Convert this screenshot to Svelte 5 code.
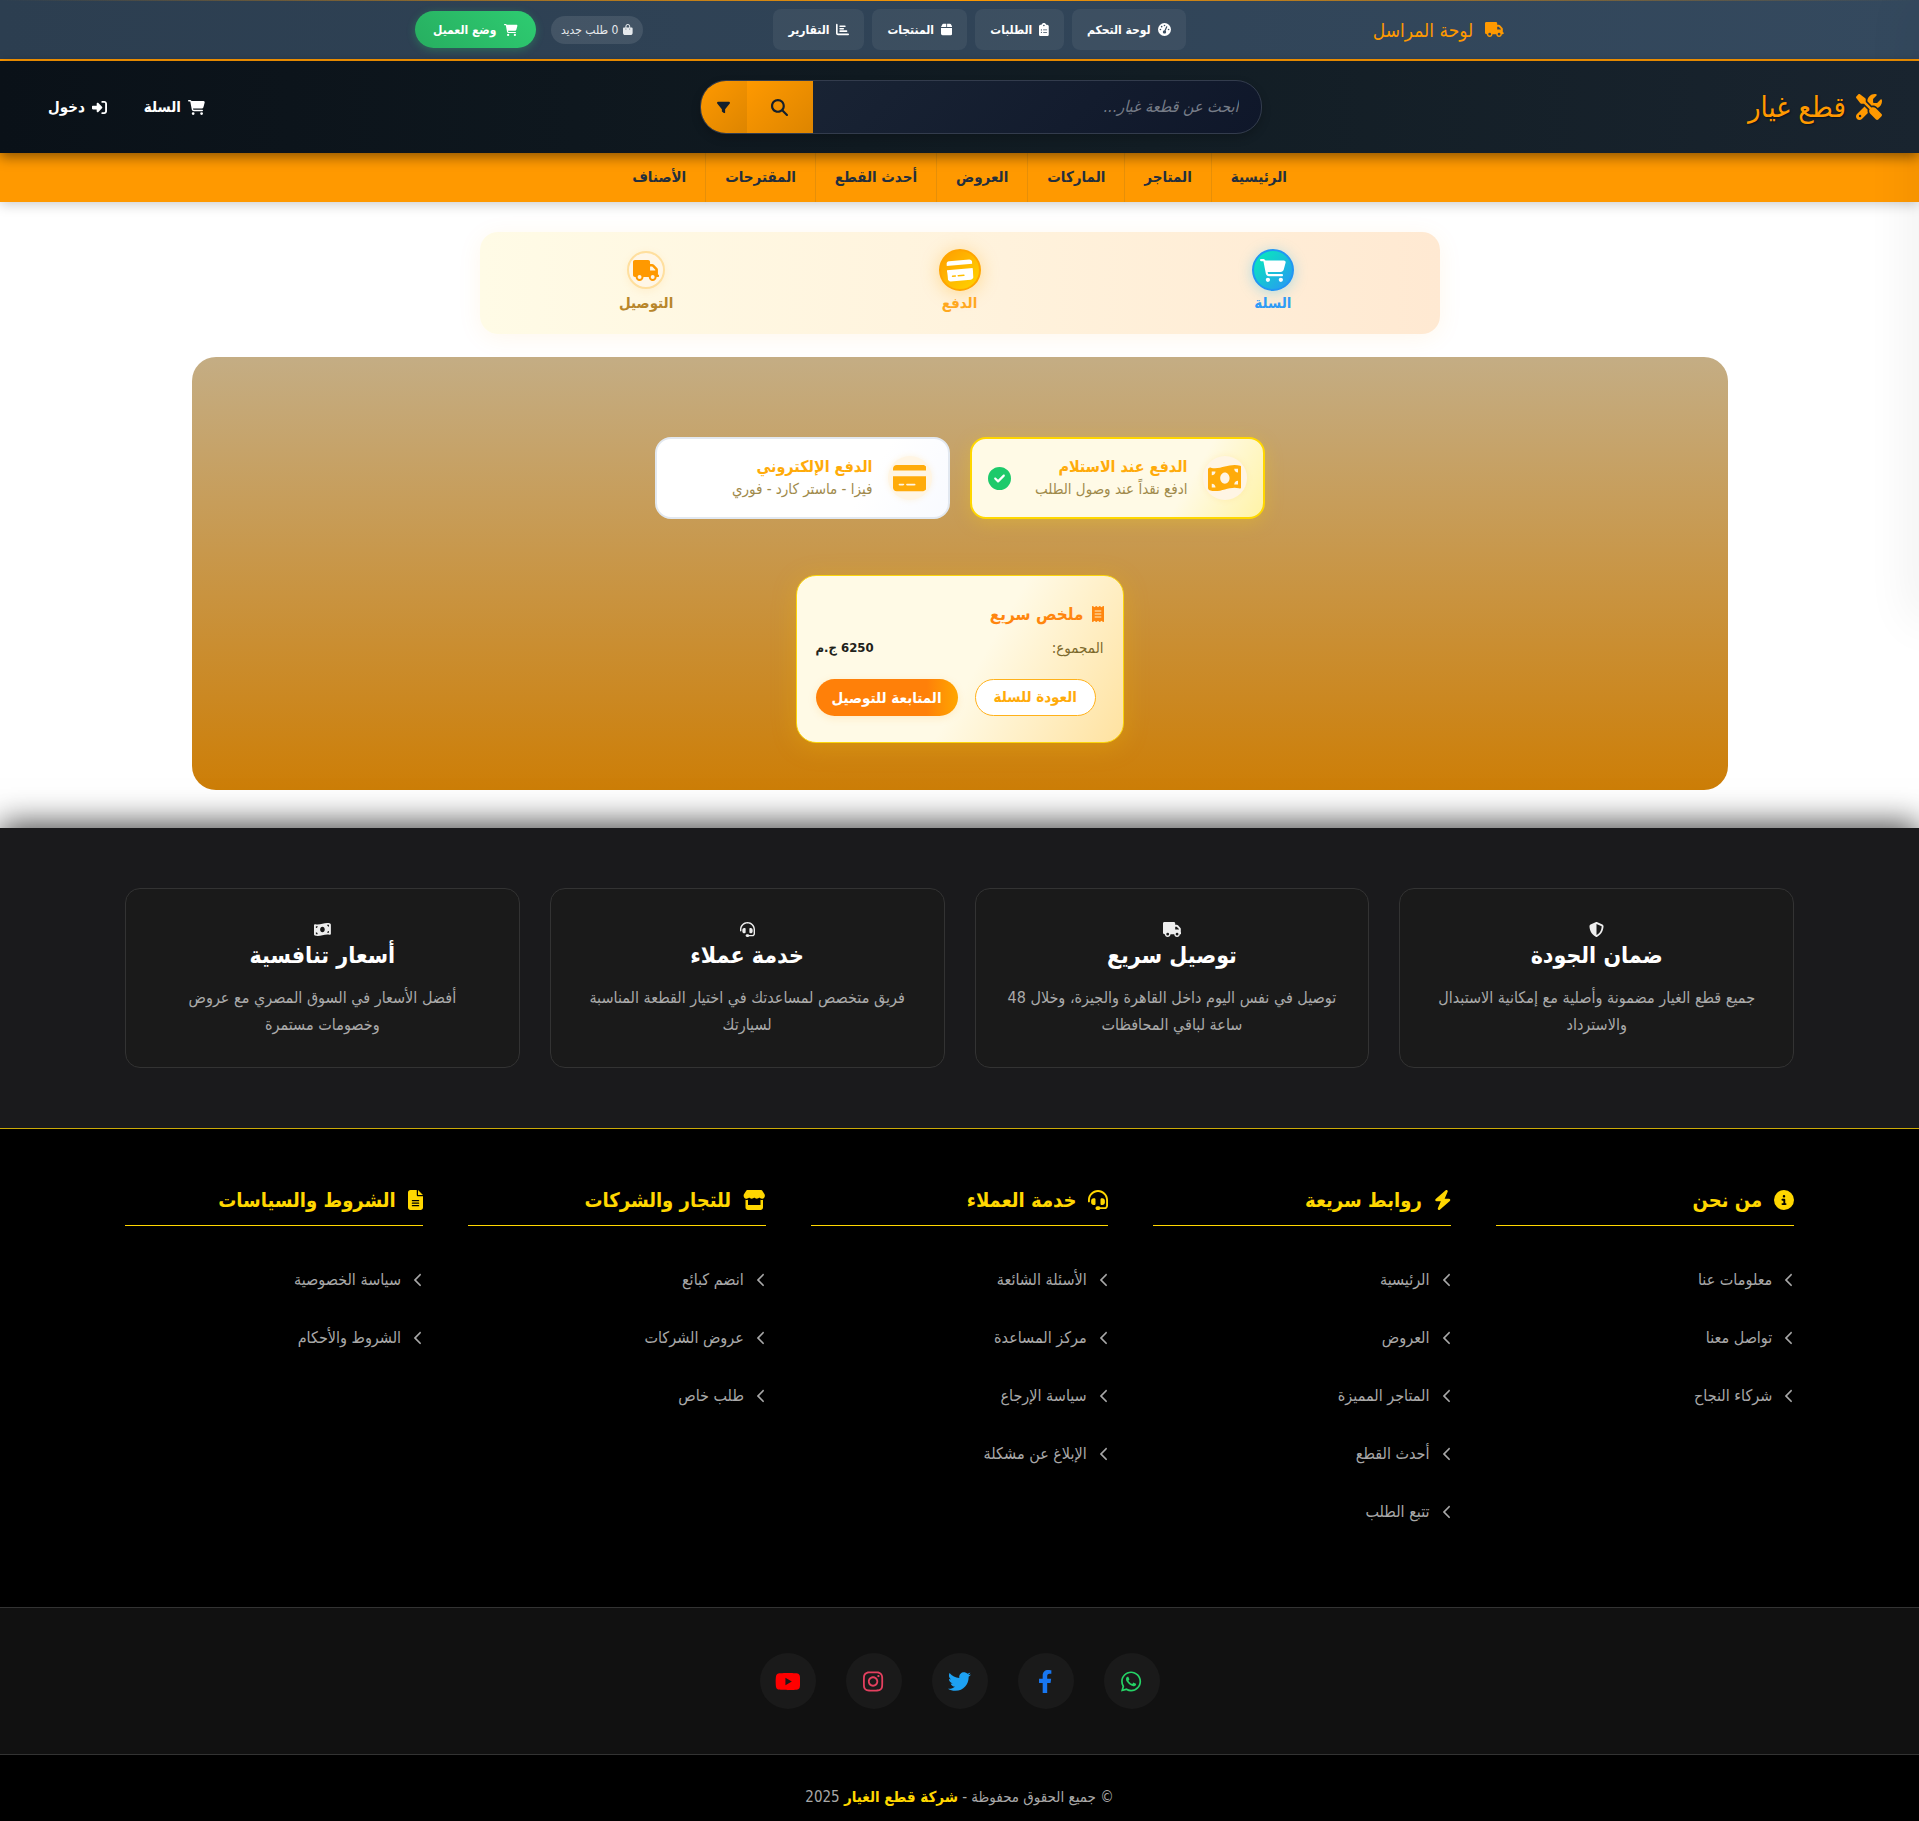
<script>
  const icons = {
    truck: [640, 'M48 0C21.5 0 0 21.5 0 48V368c0 26.5 21.5 48 48 48H64c0 53 43 96 96 96s96-43 96-96H384c0 53 43 96 96 96s96-43 96-96h32c17.7 0 32-14.3 32-32s-14.3-32-32-32V288 256 237.3c0-17-6.7-33.3-18.7-45.3L512 114.7c-12-12-28.3-18.7-45.3-18.7H416V48c0-26.5-21.5-48-48-48H48zM416 160h50.7L544 237.3V256H416V160zM112 416a48 48 0 1 1 96 0 48 48 0 1 1-96 0zm368-48a48 48 0 1 1 0 96 48 48 0 1 1 0-96z'],
    cart: [576, 'M0 24C0 10.7 10.7 0 24 0H69.5c22 0 41.5 12.8 50.6 32h411c26.3 0 45.5 25 38.6 50.4l-41 152.3c-8.5 31.4-37 53.3-69.5 53.3H170.7l5.4 28.5c2.2 11.3 12.1 19.5 23.6 19.5H488c13.3 0 24 10.7 24 24s-10.7 24-24 24H199.7c-34.6 0-64.3-24.6-70.7-58.5L77.4 54.5c-.7-3.8-4-6.5-7.9-6.5H24C10.7 48 0 37.3 0 24zM128 464a48 48 0 1 1 96 0 48 48 0 1 1-96 0zm336-48a48 48 0 1 1 0 96 48 48 0 1 1 0-96z'],
    card: [576, 'M64 32C28.7 32 0 60.7 0 96v32H576V96c0-35.3-28.7-64-64-64H64zM576 224H0V416c0 35.3 28.7 64 64 64H512c35.3 0 64-28.7 64-64V224zM112 352h64c8.8 0 16 7.2 16 16s-7.2 16-16 16H112c-8.8 0-16-7.2-16-16s7.2-16 16-16zm112 16c0-8.8 7.2-16 16-16H368c8.8 0 16 7.2 16 16s-7.2 16-16 16H240c-8.8 0-16-7.2-16-16z'],
    search: [512, 'M416 208c0 45.9-14.9 88.3-40 122.7L502.6 457.4c12.5 12.5 12.5 32.8 0 45.3s-32.8 12.5-45.3 0L330.7 376c-34.4 25.2-76.8 40-122.7 40C93.1 416 0 322.9 0 208S93.1 0 208 0S416 93.1 416 208zM208 352a144 144 0 1 0 0-288 144 144 0 1 0 0 288z'],
    filter: [512, 'M3.9 54.9C10.5 40.9 24.5 32 40 32H472c15.5 0 29.5 8.9 36.1 22.9s4.6 30.5-5.2 42.5L320 320.9V448c0 12.1-6.8 23.2-17.7 28.6s-23.8 4.3-33.5-3l-64-48c-8.1-6-12.8-15.5-12.8-25.6V320.9L9 97.3C-.7 85.4-2.8 68.8 3.9 54.9z'],
    login: [512, 'M217.9 105.9L340.7 228.7c7.2 7.2 11.3 17.1 11.3 27.3s-4.1 20.1-11.3 27.3L217.9 406.1c-6.4 6.4-15 9.9-24 9.9c-18.7 0-33.9-15.2-33.9-33.9l0-62.1L32 320c-17.7 0-32-14.3-32-32l0-64c0-17.7 14.3-32 32-32l128 0 0-62.1c0-18.7 15.2-33.9 33.9-33.9c9 0 17.6 3.6 24 9.9zM352 416l64 0c17.7 0 32-14.3 32-32l0-256c0-17.7-14.3-32-32-32l-64 0c-17.7 0-32-14.3-32-32s14.3-32 32-32l64 0c53 0 96 43 96 96l0 256c0 53-43 96-96 96l-64 0c-17.7 0-32-14.3-32-32s14.3-32 32-32z'],
    tools: [512, 'M78.6 5C69.1-2.4 55.6-1.5 47 7L7 47c-8.5 8.5-9.4 22-2.1 31.6l80 104c4.5 5.9 11.6 9.4 19 9.4h54.1l109 109c-14.7 29-10 65.4 14.3 89.6l112 112c12.5 12.5 32.8 12.5 45.3 0l64-64c12.5-12.5 12.5-32.8 0-45.3l-112-112c-24.2-24.2-60.6-29-89.6-14.3l-109-109V104c0-7.5-3.5-14.5-9.4-19L78.6 5zM19.9 396.1C7.2 408.8 0 426.1 0 444.1C0 481.6 30.4 512 67.9 512c18 0 35.3-7.2 48-19.9L233.7 374.3c-7.8-20.9-9-43.6-3.6-65.1l-61.7-61.7L19.9 396.1zM512 144c0-10.5-1.1-20.7-3.2-30.5c-2.4-11.2-16.1-14.1-24.2-6l-63.9 63.9c-3 3-7.1 4.7-11.3 4.7H352c-8.8 0-16-7.2-16-16V102.6c0-4.2 1.7-8.3 4.7-11.3l63.9-63.9c8.1-8.1 5.2-21.8-6-24.2C388.7 1.1 378.5 0 368 0C288.5 0 224 64.5 224 144l0 .8 85.3 85.3c36-9.1 75.8 .5 104 28.7L429 274.5c49-23 83-72.8 83-130.5zM56 432a24 24 0 1 1 48 0 24 24 0 1 1-48 0z'],
    gauge: [512, 'M0 256a256 256 0 1 1 512 0A256 256 0 1 1 0 256zM288 96a32 32 0 1 0-64 0 32 32 0 1 0 64 0zM256 416c35.3 0 64-28.7 64-64c0-17.4-6.9-33.1-18.1-44.6L366 161.7c5.3-12.1-.2-26.3-12.3-31.6s-26.3 .2-31.6 12.3L257.9 288c-.6 0-1.3 0-1.9 0c-35.3 0-64 28.7-64 64s28.7 64 64 64zM176 144a32 32 0 1 0-64 0 32 32 0 1 0 64 0zM96 288a32 32 0 1 0 0-64 32 32 0 1 0 0 64zm352-32a32 32 0 1 0-64 0 32 32 0 1 0 64 0z'],
    clipboard: [384, 'M192 0c-41.8 0-77.4 26.7-90.5 64H64C28.7 64 0 92.7 0 128V448c0 35.3 28.7 64 64 64H320c35.3 0 64-28.7 64-64V128c0-35.3-28.7-64-64-64H282.5C269.4 26.7 233.8 0 192 0zm0 64a32 32 0 1 1 0 64 32 32 0 1 1 0-64zM72 272a24 24 0 1 1 48 0 24 24 0 1 1-48 0zm104-16H304c8.8 0 16 7.2 16 16s-7.2 16-16 16H176c-8.8 0-16-7.2-16-16s7.2-16 16-16zM72 368a24 24 0 1 1 48 0 24 24 0 1 1-48 0zm88 0c0-8.8 7.2-16 16-16H304c8.8 0 16 7.2 16 16s-7.2 16-16 16H176c-8.8 0-16-7.2-16-16z'],
    box: [448, 'M50.7 58.5L0 160H208V32H93.7C75.5 32 58.9 42.3 50.7 58.5zM240 160H448L397.3 58.5C389.1 42.3 372.5 32 354.3 32H240V160zm208 32H0V416c0 35.3 28.7 64 64 64H384c35.3 0 64-28.7 64-64V192z'],
    chart: [512, 'M32 32c17.7 0 32 14.3 32 32V400c0 8.8 7.2 16 16 16H480c17.7 0 32 14.3 32 32s-14.3 32-32 32H80c-44.2 0-80-35.8-80-80V64C0 46.3 14.3 32 32 32zm96 96c0-17.7 14.3-32 32-32l192 0c17.7 0 32 14.3 32 32s-14.3 32-32 32H160c-17.7 0-32-14.3-32-32zm32 64H288c17.7 0 32 14.3 32 32s-14.3 32-32 32H160c-17.7 0-32-14.3-32-32s14.3-32 32-32zm0 96H416c17.7 0 32 14.3 32 32s-14.3 32-32 32H160c-17.7 0-32-14.3-32-32s14.3-32 32-32z'],
    bag: [448, 'M160 112c0-35.3 28.7-64 64-64s64 28.7 64 64v48H160V112zm-48 48H48c-26.5 0-48 21.5-48 48V416c0 53 43 96 96 96H352c53 0 96-43 96-96V208c0-26.5-21.5-48-48-48H336V112C336 50.1 285.9 0 224 0S112 50.1 112 112v48zm24 48a24 24 0 1 1 0 48 24 24 0 1 1 0-48zm152 24a24 24 0 1 1 48 0 24 24 0 1 1-48 0z'],
    money: [576, 'M0 112.5V422.3c0 18 10.1 35 27 41.3c87 32.5 174 10.3 261-11.9c79.8-20.3 159.6-40.7 239.3-18.9c23 6.3 48.7-9.5 48.7-33.4V89.7c0-18-10.1-35-27-41.3C462 15.9 375 38.1 288 60.3C208.2 80.6 128.4 100.9 48.7 79.1C25.6 72.8 0 88.6 0 112.5zM288 352c-44.2 0-80-43-80-96s35.8-96 80-96s80 43 80 96s-35.8 96-80 96zM64 352c35.3 0 64 28.7 64 64H64V352zm64-208c0 35.3-28.7 64-64 64V144h64zM512 304v64H448c0-35.3 28.7-64 64-64zM448 96h64v64c-35.3 0-64-28.7-64-64z'],
    check: [512, 'M256 512A256 256 0 1 0 256 0a256 256 0 1 0 0 512zM369 209L241 337c-9.4 9.4-24.6 9.4-33.9 0l-64-64c-9.4-9.4-9.4-24.6 0-33.9s24.6-9.4 33.9 0l47 47L335 175c9.4-9.4 24.6-9.4 33.9 0s9.4 24.6 0 33.9z'],
    receipt: [384, 'M14 2.2C22.5-1.7 32.5-.3 39.6 5.8L80 40.4 120.4 5.8c9-7.7 22.3-7.7 31.2 0L192 40.4 232.4 5.8c9-7.7 22.3-7.7 31.2 0L304 40.4 344.4 5.8c7.1-6.1 17.1-7.5 25.6-3.6s14 12.4 14 21.8V488c0 9.4-5.5 17.9-14 21.8s-18.5 2.5-25.6-3.6L304 471.6l-40.4 34.6c-9 7.7-22.3 7.7-31.2 0L192 471.6l-40.4 34.6c-9 7.7-22.3 7.7-31.2 0L80 471.6 39.6 506.2c-7.1 6.1-17.1 7.5-25.6 3.6S0 497.4 0 488V24C0 14.6 5.5 6.1 14 2.2zM96 144c-8.8 0-16 7.2-16 16s7.2 16 16 16H288c8.8 0 16-7.2 16-16s-7.2-16-16-16H96zM80 352c0 8.8 7.2 16 16 16H288c8.8 0 16-7.2 16-16s-7.2-16-16-16H96c-8.8 0-16 7.2-16 16zM96 240c-8.8 0-16 7.2-16 16s7.2 16 16 16H288c8.8 0 16-7.2 16-16s-7.2-16-16-16H96z'],
    shield: [512, 'M256 0c4.6 0 9.2 1 13.4 2.9L457.7 82.8c22 9.3 38.4 31 38.3 57.2c-.5 99.2-41.3 280.7-213.6 363.2c-16.7 8-36.1 8-52.8 0C57.3 420.7 16.5 239.2 16 140c-.1-26.2 16.3-47.9 38.3-57.2L242.7 2.9C246.8 1 251.4 0 256 0zm0 66.8V444.8C394 378 431.1 230.1 432 141.4L256 66.8l0 0z'],
    headset: [512, 'M256 48C141.1 48 48 141.1 48 256v40c0 13.3-10.7 24-24 24s-24-10.7-24-24V256C0 114.6 114.6 0 256 0S512 114.6 512 256V400.1c0 48.6-39.4 88-88.1 88L313.6 488c-8.3 14.3-23.8 24-41.6 24H240c-26.5 0-48-21.5-48-48s21.5-48 48-48h32c17.8 0 33.3 9.7 41.6 24l110.4 .1c22.1 0 40-17.9 40-40V256c0-114.9-93.1-208-208-208zM144 208h16c17.7 0 32 14.3 32 32V352c0 17.7-14.3 32-32 32H144c-35.3 0-64-28.7-64-64V272c0-35.3 28.7-64 64-64zm224 0c35.3 0 64 28.7 64 64v48c0 35.3-28.7 64-64 64H352c-17.7 0-32-14.3-32-32V240c0-17.7 14.3-32 32-32h16z'],
    info: [512, 'M256 512A256 256 0 1 0 256 0a256 256 0 1 0 0 512zM216 336h24V272H216c-13.3 0-24-10.7-24-24s10.7-24 24-24h48c13.3 0 24 10.7 24 24v88h8c13.3 0 24 10.7 24 24s-10.7 24-24 24H216c-13.3 0-24-10.7-24-24s10.7-24 24-24zm40-208a32 32 0 1 1 0 64 32 32 0 1 1 0-64z'],
    bolt: [448, 'M349.4 44.6c5.9-13.7 1.5-29.7-10.6-38.5s-28.6-8-39.9 1.8l-256 224c-10 8.8-13.6 22.9-8.9 35.3S50.7 288 64 288H175.5L98.6 467.4c-5.9 13.7-1.5 29.7 10.6 38.5s28.6 8 39.9-1.8l256-224c10-8.8 13.6-22.9 8.9-35.3s-16.6-20.7-30-20.7H272.5L349.4 44.6z'],
    store: [576, 'M547.6 103.8L490.3 13.1C485.2 5 476.1 0 466.4 0H109.6C99.9 0 90.8 5 85.7 13.1L28.3 103.8c-29.6 46.8-3.4 111.9 51.9 119.4c4 .5 8.1 .8 12.1 .8c26.1 0 49.3-11.4 65.2-29c15.9 17.6 39.1 29 65.2 29c26.1 0 49.3-11.4 65.2-29c15.9 17.6 39.1 29 65.2 29c26.2 0 49.3-11.4 65.2-29c16 17.6 39.1 29 65.2 29c4.1 0 8.1-.3 12.1-.8c55.5-7.4 81.8-72.5 52.1-119.4zM499.7 254.9l-.1 0c-5.3 .7-10.7 1.1-16.2 1.1c-12.4 0-24.3-1.9-35.4-5.3V384H128V250.6c-11.2 3.5-23.2 5.4-35.6 5.4c-5.5 0-11-.4-16.3-1.1l-.1 0c-4.1-.6-8.1-1.3-12-2.3V384v64c0 35.3 28.7 64 64 64H448c35.3 0 64-28.7 64-64V384 252.6c-4 1-8 1.8-12.3 2.3z'],
    file: [384, 'M64 0C28.7 0 0 28.7 0 64V448c0 35.3 28.7 64 64 64H320c35.3 0 64-28.7 64-64V160H256c-17.7 0-32-14.3-32-32V0H64zM256 0V128H384L256 0zM112 256H272c8.8 0 16 7.2 16 16s-7.2 16-16 16H112c-8.8 0-16-7.2-16-16s7.2-16 16-16zm0 64H272c8.8 0 16 7.2 16 16s-7.2 16-16 16H112c-8.8 0-16-7.2-16-16s7.2-16 16-16zm0 64H272c8.8 0 16 7.2 16 16s-7.2 16-16 16H112c-8.8 0-16-7.2-16-16s7.2-16 16-16z'],
    chevron: [320, 'M9.4 233.4c-12.5 12.5-12.5 32.8 0 45.3l192 192c12.5 12.5 32.8 12.5 45.3 0s12.5-32.8 0-45.3L77.3 256 246.6 86.6c12.5-12.5 12.5-32.8 0-45.3s-32.8-12.5-45.3 0l-192 192z'],
    facebook: [320, 'M279.14 288l14.22-92.66h-88.91v-60.13c0-25.35 12.42-50.06 52.24-50.06h40.42V6.26S260.43 0 225.36 0c-73.22 0-121.08 44.38-121.08 124.72v70.62H22.89V288h81.39v224h100.17V288z'],
    twitter: [512, 'M459.37 151.716c.325 4.548.325 9.097.325 13.645 0 138.72-105.583 298.558-298.558 298.558-59.452 0-114.68-17.219-161.137-47.106 8.447.974 16.568 1.299 25.34 1.299 49.055 0 94.213-16.568 130.274-44.832-46.132-.975-84.792-31.188-98.112-72.772 6.498.974 12.995 1.624 19.818 1.624 9.421 0 18.843-1.3 27.614-3.573-48.081-9.747-84.143-51.98-84.143-102.985v-1.299c13.969 7.797 30.214 12.67 47.431 13.319-28.264-18.843-46.781-51.005-46.781-87.391 0-19.492 5.197-37.36 14.294-52.954 51.655 63.675 129.3 105.258 216.365 109.807-1.624-7.797-2.599-15.918-2.599-24.04 0-57.828 46.782-104.934 104.934-104.934 30.213 0 57.502 12.67 76.67 33.137 23.715-4.548 46.456-13.32 66.599-25.34-7.798 24.366-24.366 44.833-46.132 57.827 21.117-2.273 41.584-8.122 60.426-16.243-14.292 20.791-32.161 39.308-52.628 54.253z'],
    instagram: [448, 'M224.1 141c-63.6 0-114.9 51.3-114.9 114.9s51.3 114.9 114.9 114.9S339 319.5 339 255.9 287.7 141 224.1 141zm0 189.6c-41.1 0-74.7-33.5-74.7-74.7s33.5-74.7 74.7-74.7 74.7 33.5 74.7 74.7-33.6 74.7-74.7 74.7zm146.4-194.3c0 14.9-12 26.8-26.8 26.8-14.9 0-26.8-12-26.8-26.8s12-26.8 26.8-26.8 26.8 12 26.8 26.8zm76.1 27.2c-1.7-35.9-9.9-67.7-36.2-93.9-26.2-26.2-58-34.4-93.9-36.2-37-2.1-147.9-2.1-184.9 0-35.8 1.7-67.6 9.9-93.9 36.1s-34.4 58-36.2 93.9c-2.1 37-2.1 147.9 0 184.9 1.7 35.9 9.9 67.7 36.2 93.9s58 34.4 93.9 36.2c37 2.1 147.9 2.1 184.9 0 35.9-1.7 67.7-9.9 93.9-36.2 26.2-26.2 34.4-58 36.2-93.9 2.1-37 2.1-147.8 0-184.8zM398.8 388c-7.8 19.6-22.9 34.7-42.6 42.6-29.5 11.7-99.5 9-132.1 9s-102.7 2.6-132.1-9c-19.6-7.8-34.7-22.9-42.6-42.6-11.7-29.5-9-99.5-9-132.1s-2.6-102.7 9-132.1c7.8-19.6 22.9-34.7 42.6-42.6 29.5-11.7 99.5-9 132.1-9s102.7-2.6 132.1 9c19.6 7.8 34.7 22.9 42.6 42.6 11.7 29.5 9 99.5 9 132.1s2.7 102.7-9 132.1z'],
    youtube: [576, 'M549.655 124.083c-6.281-23.65-24.787-42.276-48.284-48.597C458.781 64 288 64 288 64S117.22 64 74.629 75.486c-23.497 6.322-42.003 24.947-48.284 48.597-11.412 42.867-11.412 132.305-11.412 132.305s0 89.438 11.412 132.305c6.281 23.65 24.787 41.5 48.284 47.821C117.22 448 288 448 288 448s170.78 0 213.371-11.486c23.497-6.321 42.003-24.171 48.284-47.821 11.412-42.867 11.412-132.305 11.412-132.305s0-89.438-11.412-132.305zm-317.51 213.508V175.185l142.739 81.205-142.739 81.201z'],
    whatsapp: [448, 'M380.9 97.1C339 55.1 283.2 32 223.9 32c-122.4 0-222 99.6-222 222 0 39.1 10.2 77.3 29.6 111L0 480l117.7-30.9c32.4 17.7 68.9 27 106.1 27h.1c122.3 0 224.1-99.6 224.1-222 0-59.3-25.2-115-67.1-157zm-157 341.6c-33.2 0-65.7-8.9-94-25.7l-6.7-4-69.8 18.3L72 359.2l-4.4-7c-18.5-29.4-28.2-63.3-28.2-98.2 0-101.7 82.8-184.5 184.6-184.5 49.3 0 95.6 19.2 130.4 54.1 34.8 34.9 56.2 81.2 56.1 130.5 0 101.8-84.9 184.6-186.6 184.6zm101.2-138.2c-5.5-2.8-32.8-16.2-37.9-18-5.1-1.9-8.8-2.8-12.5 2.8-3.7 5.6-14.3 18-17.6 21.8-3.2 3.7-6.5 4.2-12 1.4-32.6-16.3-54-29.1-75.5-66-5.7-9.8 5.7-9.1 16.3-30.3 1.8-3.7.9-6.9-.5-9.7-1.4-2.8-12.5-30.1-17.1-41.2-4.5-10.8-9.1-9.3-12.5-9.5-3.2-.2-6.9-.2-10.6-.2-3.7 0-9.7 1.4-14.8 6.9-5.1 5.6-19.4 19-19.4 46.3 0 27.3 19.9 53.7 22.6 57.4 2.8 3.7 39.1 59.7 94.8 83.8 35.2 15.2 49 16.5 66.6 13.9 10.7-1.6 32.8-13.4 37.4-26.4 4.6-13 4.6-24.1 3.2-26.4-1.3-2.5-5-3.9-10.5-6.7z']
  };

  const courierLinks = [
    { icon: 'gauge', text: 'لوحة التحكم' },
    { icon: 'clipboard', text: 'الطلبات' },
    { icon: 'box', text: 'المنتجات' },
    { icon: 'chart', text: 'التقارير' }
  ];

  const menu = ['الرئيسية', 'المتاجر', 'الماركات', 'العروض', 'أحدث القطع', 'المقترحات', 'الأصناف'];

  const steps = [
    { icon: 'cart', text: 'السلة', state: 'done' },
    { icon: 'card', text: 'الدفع', state: 'current' },
    { icon: 'truck', text: 'التوصيل', state: 'next' }
  ];

  const methods = [
    { id: 'cash', icon: 'money', title: 'الدفع عند الاستلام', text: 'ادفع نقداً عند وصول الطلب' },
    { id: 'online', icon: 'card', title: 'الدفع الإلكتروني', text: 'فيزا - ماستر كارد - فوري' }
  ];

  const features = [
    { icon: 'shield', title: 'ضمان الجودة', lines: ['جميع قطع الغيار مضمونة وأصلية مع إمكانية الاستبدال', 'والاسترداد'] },
    { icon: 'truck', title: 'توصيل سريع', lines: ['توصيل في نفس اليوم داخل القاهرة والجيزة، وخلال 48', 'ساعة لباقي المحافظات'] },
    { icon: 'headset', title: 'خدمة عملاء', lines: ['فريق متخصص لمساعدتك في اختيار القطعة المناسبة', 'لسيارتك'] },
    { icon: 'money', title: 'أسعار تنافسية', lines: ['أفضل الأسعار في السوق المصري مع عروض', 'وخصومات مستمرة'] }
  ];

  const columns = [
    { icon: 'info', title: 'من نحن', links: ['معلومات عنا', 'تواصل معنا', 'شركاء النجاح'] },
    { icon: 'bolt', title: 'روابط سريعة', links: ['الرئيسية', 'العروض', 'المتاجر المميزة', 'أحدث القطع', 'تتبع الطلب'] },
    { icon: 'headset', title: 'خدمة العملاء', links: ['الأسئلة الشائعة', 'مركز المساعدة', 'سياسة الإرجاع', 'الإبلاغ عن مشكلة'] },
    { icon: 'store', title: 'للتجار والشركات', links: ['انضم كبائع', 'عروض الشركات', 'طلب خاص'] },
    { icon: 'file', title: 'الشروط والسياسات', links: ['سياسة الخصوصية', 'الشروط والأحكام'] }
  ];

  const socials = ['whatsapp', 'facebook', 'twitter', 'instagram', 'youtube'];

  let method = $state('cash');
</script>

{#snippet icon(name)}
  <svg class="icon" viewBox="0 0 {icons[name][0]} 512" aria-hidden="true"><path d={icons[name][1]} /></svg>
{/snippet}

<div class="page" dir="rtl" lang="ar">
  <div class="courier">
    <div class="courier-inner">
      <a class="courier-brand" href="#courier">{@render icon('truck')}<span>لوحة المراسل</span></a>
      <nav class="courier-nav">
        {#each courierLinks as link}
          <a href="#{link.icon}">{@render icon(link.icon)}<span>{link.text}</span></a>
        {/each}
      </nav>
      <div class="courier-side">
        <span class="pending">{@render icon('bag')}<span>0 طلب جديد</span></span>
        <button class="mode" type="button">{@render icon('cart')}<span>وضع العميل</span></button>
      </div>
    </div>
  </div>

  <header class="header">
    <a class="logo" href="#home">{@render icon('tools')}<span>قطع غيار</span></a>
    <form class="search" onsubmit={(e) => e.preventDefault()}>
      <input type="search" placeholder="ابحث عن قطعة غيار..." aria-label="ابحث عن قطعة غيار" />
      <button class="find" type="submit" aria-label="بحث">{@render icon('search')}</button>
      <button class="refine" type="button" aria-label="تصفية">{@render icon('filter')}</button>
    </form>
    <div class="account">
      <a href="#cart">{@render icon('cart')}<span>السلة</span></a>
      <a href="#login">{@render icon('login')}<span>دخول</span></a>
    </div>
  </header>

  <nav class="menu">
    {#each menu as item}
      <a href="#menu">{item}</a>
    {/each}
  </nav>

  <main>
    <ol class="steps">
      {#each steps as step}
        <li class={step.state}>
          <span class="dot">{@render icon(step.icon)}</span>
          <span class="step-name">{step.text}</span>
        </li>
      {/each}
    </ol>

    <section class="panel">
      <div class="methods">
        {#each methods as m}
          <label class="method" class:selected={method === m.id}>
            <input type="radio" name="method" value={m.id} bind:group={method} />
            <span class="method-icon">{@render icon(m.icon)}</span>
            <span class="method-text">
              <strong>{m.title}</strong>
              <small>{m.text}</small>
            </span>
            {#if method === m.id}
              <span class="tick">{@render icon('check')}</span>
            {/if}
          </label>
        {/each}
      </div>

      <div class="summary">
        <h2>{@render icon('receipt')}<span>ملخص سريع</span></h2>
        <div class="total"><span>المجموع:</span><strong>6250 ج.م</strong></div>
        <div class="actions">
          <a class="back" href="#cart">العودة للسلة</a>
          <button class="go" type="button">المتابعة للتوصيل</button>
        </div>
      </div>
    </section>
  </main>

  <footer>
    <div class="features">
      {#each features as f}
        <article>
          {@render icon(f.icon)}
          <h3>{f.title}</h3>
          <p>{f.lines[0]}<br />{f.lines[1]}</p>
        </article>
      {/each}
    </div>

    <div class="columns">
      {#each columns as col}
        <section>
          <h3>{@render icon(col.icon)}<span>{col.title}</span></h3>
          <ul>
            {#each col.links as link}
              <li><a href="#link">{@render icon('chevron')}<span>{link}</span></a></li>
            {/each}
          </ul>
        </section>
      {/each}
    </div>

    <div class="socials">
      {#each socials as s}
        <a class={s} href="#{s}" aria-label={s}>{@render icon(s)}</a>
      {/each}
    </div>

    <p class="copyright">© جميع الحقوق محفوظة - <strong>شركة قطع الغيار</strong> 2025</p>
  </footer>
</div>

<style>
  :global(body) {
    background: #fff;
  }

  .page {
    position: relative;
    overflow: hidden;
    font-family: 'DejaVu Sans Condensed', 'DejaVu Sans', sans-serif;
    font-size: 15px;
    line-height: 24px;
    color: #1a1a1a;
  }

  /* soft edge of the closed side drawer */
  .page::after {
    content: '';
    position: absolute;
    top: 0;
    right: -20px;
    width: 20px;
    height: 620px;
    box-shadow: 0 0 50px rgba(0, 0, 0, 0.12);
    pointer-events: none;
  }

  .page * {
    box-sizing: border-box;
  }

  a {
    color: inherit;
    text-decoration: none;
  }

  button,
  input {
    font: inherit;
    border: 0;
    margin: 0;
  }

  button {
    cursor: pointer;
  }

  ul,
  ol {
    list-style: none;
    margin: 0;
    padding: 0;
  }

  h2,
  h3,
  p {
    margin: 0;
  }

  .icon {
    display: block;
    flex: none;
    height: 16px;
    fill: currentColor;
  }

  /* courier bar */
  .courier {
    height: 61px;
    display: grid;
    align-items: center;
    border-bottom: 2px solid #ff9900;
    background:
      linear-gradient(90deg, transparent, #ff9900, transparent) top / 100% 1px no-repeat,
      linear-gradient(90deg, #2c3e50, #34495e);
  }

  .courier-inner {
    display: flex;
    align-items: center;
    justify-content: space-between;
    width: 100%;
    max-width: 1089px;
    margin: 0 auto;
    white-space: nowrap;
  }

  .courier-brand {
    display: flex;
    align-items: center;
    gap: 12px;
    width: 188px;
    font-size: 19px;
    color: #ff9900;
  }

  .courier-brand .icon {
    height: 15px;
  }

  .courier-nav {
    display: flex;
    gap: 8px;
  }

  .courier-nav a {
    display: flex;
    align-items: center;
    gap: 7px;
    height: 41px;
    padding: 0 15px;
    border-radius: 8px;
    background: rgba(255, 255, 255, 0.06);
    color: #fff;
    font-size: 12px;
    font-weight: 700;
  }

  .courier-nav .icon {
    height: 13px;
  }

  .courier-side {
    display: flex;
    align-items: center;
    gap: 15px;
  }

  .pending {
    display: flex;
    align-items: center;
    gap: 5px;
    height: 28px;
    padding: 0 10px;
    border-radius: 15px;
    background: rgba(255, 255, 255, 0.1);
    color: #e6e9ec;
    font-size: 12px;
  }

  .pending .icon {
    height: 11px;
  }

  .mode {
    display: flex;
    align-items: center;
    gap: 8px;
    height: 37px;
    padding: 0 18px;
    border-radius: 20px;
    background: linear-gradient(45deg, #27ae60, #2ecc71);
    box-shadow: 0 2px 8px rgba(46, 204, 113, 0.3);
    color: #fff;
    font-size: 12px;
    font-weight: 700;
  }

  .mode .icon {
    height: 12px;
  }

  /* header */
  .header {
    position: relative;
    z-index: 2;
    display: grid;
    grid-template-columns: 1fr minmax(0, 562px) 1fr;
    align-items: center;
    height: 92px;
    padding: 0 37px;
    background: linear-gradient(90deg, #0a1118, #121d24 60%, #19242f);
    box-shadow: 0 4px 12px rgba(0, 0, 0, 0.45);
  }

  .logo {
    display: flex;
    align-items: center;
    gap: 10px;
    color: #ff9900;
    font-size: 29px;
    line-height: 40px;
    text-shadow: 1px 1px 2px rgba(0, 0, 0, 0.5);
  }

  .logo .icon {
    height: 26px;
  }

  .search {
    display: flex;
    height: 54px;
    margin-inline: -21px 21px;
    overflow: hidden;
    border: 1px solid #333c4d;
    border-radius: 26px;
    background: linear-gradient(-45deg, #0f172a, #1b2636);
    box-shadow: 0 4px 10px rgba(0, 0, 0, 0.2);
  }

  .search input {
    flex: 1;
    min-width: 0;
    padding: 0 22px;
    background: none;
    color: #fff;
    font-size: 16px;
    outline: none;
  }

  .search input::placeholder {
    color: #767c87;
    font-style: italic;
    opacity: 1;
  }

  .search button {
    display: grid;
    place-items: center;
    padding: 0;
    background: linear-gradient(135deg, #ff9900, #dd8500);
    color: #131f2b;
  }

  .search .find {
    width: 66px;
  }

  .search .refine {
    width: 46px;
  }

  .search .find .icon {
    height: 17px;
  }

  .search .refine .icon {
    height: 13px;
  }

  .account {
    display: flex;
    justify-content: flex-end;
    gap: 37px;
    padding-left: 11px;
    color: #fff;
    font-weight: 700;
  }

  .account a {
    display: flex;
    align-items: center;
    gap: 7px;
  }

  .account .icon {
    height: 15px;
  }

  /* main menu */
  .menu {
    display: flex;
    justify-content: center;
    height: 49px;
    background: #ff9900;
    box-shadow: 0 2px 12px rgba(0, 0, 0, 0.22);
    font-weight: 700;
    color: #232f3e;
  }

  .menu a {
    padding: 12px 19px;
    border-left: 1px solid #e68f08;
  }

  .menu a:last-child {
    border-left: 0;
  }

  /* checkout steps */
  main {
    padding: 30px 20px 38px;
  }

  .steps {
    display: flex;
    max-width: 960px;
    height: 102px;
    margin: 0 auto 23px;
    padding: 16px 10px;
    border-radius: 18px;
    background: linear-gradient(270deg, #ffe9d2, #fff3dd 50%, #fffbe6);
    box-shadow: 0 4px 24px rgba(255, 153, 0, 0.08);
    font-weight: 700;
  }

  .steps li {
    flex: 1;
    display: flex;
    flex-direction: column;
    align-items: center;
    color: #b8862b;
  }

  .dot {
    display: grid;
    place-items: center;
    width: 38px;
    height: 38px;
    margin: 3px 0 2px;
    border: 2px solid #ffdf9e;
    border-radius: 50%;
    background: #fff6e6;
    color: #ff9900;
    box-shadow: 0 2px 8px rgba(255, 153, 0, 0.1);
  }

  .dot .icon {
    height: 21px;
  }

  .done .dot,
  .current .dot {
    width: 42px;
    height: 42px;
    margin: 1px 0 0;
    color: #fff;
  }

  .done .dot {
    border-color: #2196f3;
    background: linear-gradient(135deg, #06efb7, #2a95f6);
    box-shadow: 0 2px 14px rgba(33, 190, 243, 0.35);
  }

  .current .dot {
    border-color: #ffa500;
    background: linear-gradient(135deg, #ff9d00, #ffd500);
    box-shadow: 0 2px 18px rgba(255, 170, 0, 0.35);
  }

  .done .icon,
  .current .icon {
    height: 23px;
  }

  .current .icon {
    transform: rotate(-5deg);
  }

  .steps .done {
    color: #2f9bf5;
  }

  .steps .current {
    color: #ffa81e;
  }

  /* payment panel */
  .panel {
    display: flex;
    flex-direction: column;
    align-items: center;
    gap: 56px;
    max-width: 1536px;
    margin: 0 auto;
    padding: 80px 20px 47px;
    border-radius: 24px;
    background: linear-gradient(#c4ad84, #cd7e07);
  }

  .methods {
    display: flex;
    gap: 20px;
  }

  .method {
    display: flex;
    align-items: center;
    width: 295px;
    height: 82px;
    padding: 0 16px;
    border: 2px solid #e2e8f0;
    border-radius: 16px;
    background: linear-gradient(300deg, #f8faff, #fff 30%);
    cursor: pointer;
  }

  .method.selected {
    border-color: #ffd700;
    background: linear-gradient(300deg, #fff3a6, #fffae6 28%);
    box-shadow: 0 4px 18px rgba(255, 215, 0, 0.25);
  }

  .method input {
    position: absolute;
    opacity: 0;
  }

  .method-icon {
    display: grid;
    place-items: center;
    flex: none;
    width: 44px;
    height: 44px;
    border-radius: 50%;
    background: #fff5e4;
    box-shadow: 0 0 6px rgba(255, 170, 0, 0.12);
    color: #ffab0a;
  }

  .method-icon .icon {
    height: 30px;
  }

  .method-text {
    flex: 1;
    display: flex;
    flex-direction: column;
    margin-inline-start: 15px;
    white-space: nowrap;
  }

  .method-text strong {
    color: #ffab0a;
    font-size: 16px;
    line-height: 22px;
  }

  .method-text small {
    color: #a08a4b;
    font-size: 15px;
    line-height: 22px;
  }

  .tick {
    color: #1dca6b;
    background: radial-gradient(#fff 40%, transparent 45%);
  }

  .tick .icon {
    height: 23px;
  }

  .summary {
    width: 328px;
    padding: 25px 19px 26px;
    border: 1px solid #fbd60c;
    border-radius: 20px;
    background: linear-gradient(300deg, #ffe2a0, #fffae6 45%);
    box-shadow: 0 4px 24px rgba(255, 200, 0, 0.25);
  }

  .summary h2 {
    display: flex;
    align-items: center;
    gap: 8px;
    height: 26px;
    color: #ff860f;
    font-size: 17px;
  }

  .total {
    display: flex;
    justify-content: space-between;
    padding: 9px 0 19px;
    color: #7d6a2d;
  }

  .total strong {
    color: #22221a;
    font-size: 13px;
  }

  .actions {
    display: flex;
    justify-content: flex-end;
    gap: 17px;
    font-weight: 700;
  }

  .back,
  .go {
    height: 37px;
    padding: 0 16px;
    border-radius: 20px;
    line-height: 36px;
    white-space: nowrap;
  }

  .back {
    padding: 0 18px;
    border: 1px solid #ffb11a;
    background: #fff;
    color: #ffab0a;
    line-height: 34px;
  }

  .go {
    background: linear-gradient(270deg, #ffa600, #ff8009 22%);
    color: #fff;
    box-shadow: 0 2px 8px rgba(255, 152, 0, 0.15);
  }

  /* footer */
  footer {
    background: #000;
    color: #a8a8a8;
    box-shadow: 0 -5px 30px rgba(0, 0, 0, 0.7);
  }

  .features {
    display: grid;
    grid-template-columns: repeat(4, 1fr);
    gap: 30px;
    padding-top: 60px;
    padding-bottom: 60px;
    border-bottom: 1px solid #c9a906;
    background: #1a1a1c;
  }

  .features,
  .columns {
    padding-inline: calc(5% + 29px);
  }

  .features article {
    display: flex;
    flex-direction: column;
    align-items: center;
    min-height: 180px;
    padding: 33px 20px 28px;
    border: 1px solid #333;
    border-radius: 15px;
    background: #1a1a1a;
    text-align: center;
    color: #eee;
  }

  .features .icon {
    height: 15px;
  }

  .features h3 {
    margin: 0 0 11px;
    color: #fff;
    font-size: 23px;
    line-height: 36px;
  }

  .features p {
    color: #aaa;
    font-size: 16px;
    line-height: 27px;
  }

  .columns {
    display: grid;
    grid-template-columns: repeat(5, 1fr);
    gap: 45px;
    padding-top: 54px;
    padding-bottom: 66px;
  }

  .columns h3 {
    display: flex;
    align-items: center;
    gap: 12px;
    height: 43px;
    margin-bottom: 25px;
    padding-bottom: 8px;
    border-bottom: 1px solid #ffd700;
    color: #ffd700;
    font-size: 20px;
  }

  .columns h3 .icon {
    height: 20px;
  }

  .columns li a {
    display: flex;
    align-items: center;
    gap: 13px;
    height: 58px;
    font-size: 16px;
  }

  .columns li .icon {
    height: 14px;
  }

  .socials {
    display: flex;
    justify-content: center;
    gap: 30px;
    padding: 45px 0;
    border-top: 1px solid #333;
    border-bottom: 1px solid #333;
    background: #111;
  }

  .socials a {
    display: grid;
    place-items: center;
    width: 56px;
    height: 56px;
    border-radius: 50%;
    background: #1a1a1a;
  }

  .socials .icon {
    height: 23px;
  }

  .whatsapp {
    color: #25d366;
  }

  .facebook {
    color: #1877f2;
  }

  .twitter {
    color: #1da1f2;
  }

  .instagram {
    color: #e4405f;
  }

  .youtube {
    color: #ff0000;
  }

  .copyright {
    padding: 30px 20px 12px;
    text-align: center;
  }

  .copyright strong {
    color: #ffd700;
  }
</style>
